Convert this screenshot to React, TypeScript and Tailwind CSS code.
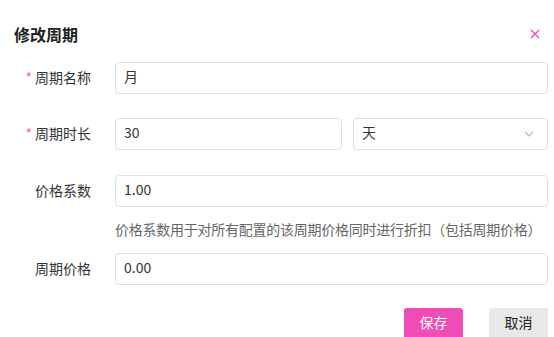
const font = { fontFamily: '"Noto Sans CJK SC", "Noto Sans", sans-serif' }

function Label({ text, required }: { text: string; required?: boolean }) {
  return (
    <div className="flex w-[101px] shrink-0 items-center justify-end pb-[2px] pr-6 text-[14px] text-[#333]">
      {required && <span className="mr-[3px] text-[#f56c6c]">*</span>}
      {text}
    </div>
  )
}

function Input({ value, className = '' }: { value: string; className?: string }) {
  return (
    <div
      className={`flex h-8 items-center rounded-[4px] border border-[#dcdfe6] bg-white px-2 pb-[3px] text-[14px] text-[#333] ${className}`}
    >
      {value}
    </div>
  )
}

export default function App() {
  return (
    <div className="h-[337px] w-[554px] overflow-hidden bg-white pl-[14px] pr-[6px]" style={font}>
      <div className="flex items-center justify-between pt-[24px]">
        <h2 className="text-[16px] font-bold leading-5 text-[#222]">修改周期</h2>
        <svg width="10" height="10" viewBox="0 0 10 10" className="mr-2">
          <path d="M1 1L9 9M9 1L1 9" stroke="#f04bb4" strokeWidth="1.4" />
        </svg>
      </div>

      <div className="mt-[18px] flex">
        <Label text="周期名称" required />
        <Input value="月" className="flex-1" />
      </div>

      <div className="mt-6 flex">
        <Label text="周期时长" required />
        <Input value="30" className="w-[227px]" />
        <div className="ml-[11px] flex h-8 flex-1 items-center justify-between rounded-[4px] border border-[#dcdfe6] px-2 pb-[3px] text-[14px] text-[#333]">
          天
          <svg width="12" height="12" viewBox="0 0 12 12" className="mr-[4px] mt-[3px]">
            <path d="M2 4L6 8L10 4" fill="none" stroke="#b4b8bf" strokeWidth="1.2" />
          </svg>
        </div>
      </div>

      <div className="mt-[25px] flex">
        <Label text="价格系数" />
        <Input value="1.00" className="flex-1" />
      </div>
      <div className="ml-[101px] mt-[11px] whitespace-nowrap text-[14px] leading-[22px] tracking-[-0.25px] text-[#666]">
        价格系数用于对所有配置的该周期价格同时进行折扣（包括周期价格）
      </div>

      <div className="mt-[13px] flex">
        <Label text="周期价格" />
        <Input value="0.00" className="flex-1" />
      </div>

      <div className="mt-[23px] flex justify-end gap-[26px]">
        <button className="h-8 w-[59px] rounded-[3px] bg-[#ef4cb7] pb-[3px] text-[14px] text-white">保存</button>
        <button className="h-8 w-[59px] rounded-[3px] bg-[#e8e8e8] pb-[3px] text-[14px] text-[#222]">取消</button>
      </div>
    </div>
  )
}
